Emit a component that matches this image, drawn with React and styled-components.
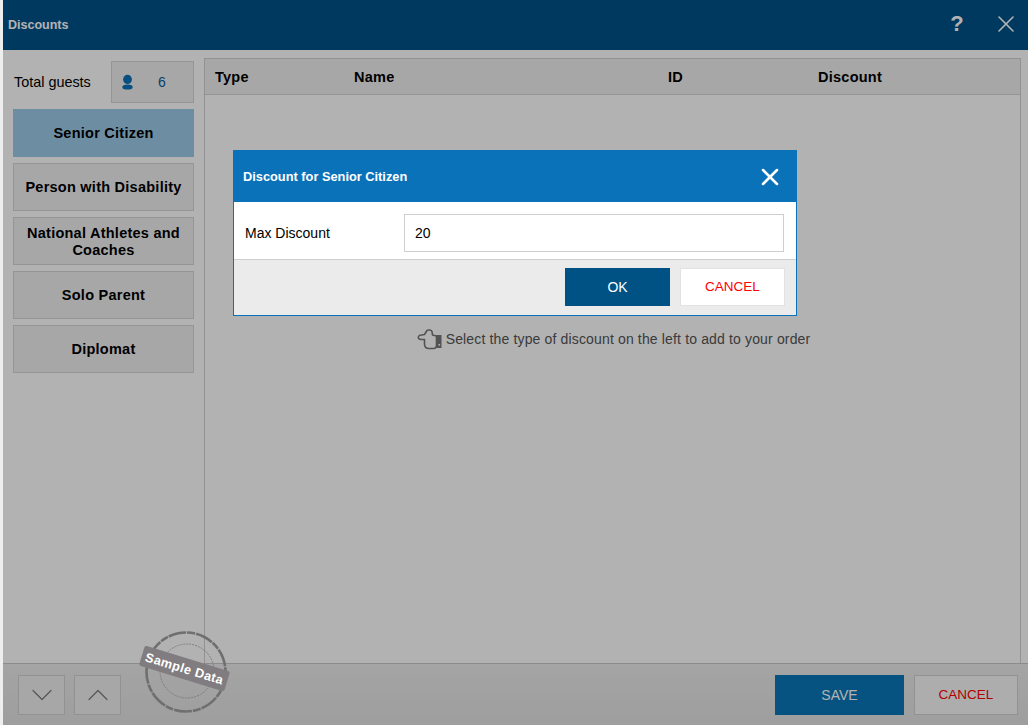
import React from "react";
import styled, { createGlobalStyle } from "styled-components";
import { X, ChevronDown, ChevronUp } from "lucide-react";

const GlobalStyle = createGlobalStyle`
  html, body {
    margin: 0;
    padding: 0;
    background: #eeeeee;
  }
  * {
    box-sizing: border-box;
  }
  body {
    font-family: "Liberation Sans", Arial, sans-serif;
  }
`;

const Page = styled.div`
  position: relative;
  display: flex;
  flex-direction: column;
  width: 1028px;
  height: 725px;
  overflow: hidden;
  background: #ffffff;
  border-left: 3px solid #eeeeee;
`;

const Accent = styled.div`
  position: absolute;
  left: -3px;
  top: 0;
  width: 3px;
  height: 50px;
  background: #005a8c;
`;

const TitleBar = styled.header`
  display: flex;
  align-items: center;
  height: 50px;
  flex: none;
  padding: 0 8px 2px 5px;
  background: #00528a;
  color: #ffffff;
`;

const Title = styled.h1`
  flex: 1;
  margin: 2px 0 0;
  font-size: 12.5px;
  font-weight: 700;
`;

const HelpMark = styled.span`
  width: 14px;
  margin-right: 28px;
  font-size: 22px;
  font-weight: 700;
  text-align: center;
`;

const Main = styled.main`
  display: flex;
  flex: 1;
  min-height: 0;
  gap: 10px;
  padding: 8px 7px 0 10px;
`;

const Sidebar = styled.aside`
  display: flex;
  flex-direction: column;
  gap: 6px;
  width: 181px;
  flex: none;
`;

const GuestRow = styled.div`
  display: flex;
  align-items: center;
  justify-content: space-between;
  height: 42px;
  margin-top: 3px;
  padding-left: 1px;
  font-size: 14.4px;
  color: #000000;
`;

const GuestBox = styled.div`
  display: flex;
  align-items: center;
  width: 83px;
  height: 42px;
  padding-left: 9px;
  border: 1px solid #d6d6d6;
  background: #f0f0f0;
  color: #0a5a94;
  font-size: 14px;
`;

const GuestCount = styled.span`
  margin-left: 24px;
`;

const TypeButton = styled.button`
  display: block;
  width: 181px;
  height: 48px;
  padding: 1px 6px 0;
  border: 1px solid ${({ $active }) => ($active ? "#9dcbe9" : "#d6d6d6")};
  background: ${({ $active }) => ($active ? "#9dcbe9" : "#f0f0f0")};
  color: #000000;
  font-family: inherit;
  font-size: 14.5px;
  font-weight: 700;
  line-height: 17px;
  letter-spacing: 0.25px;
`;

const TablePanel = styled.section`
  flex: 1;
  border: 1px solid #d2d2d2;
  border-bottom: 0;
  display: flex;
  flex-direction: column;
`;

const TableHead = styled.div`
  display: grid;
  grid-template-columns: 139px 314px 150px 1fr;
  align-items: center;
  height: 36px;
  flex: none;
  padding-left: 10px;
  background: #f0f0f0;
  border-bottom: 1px solid #d6d6d6;
  font-size: 14.5px;
  font-weight: 700;
  letter-spacing: 0.25px;
  color: #000000;
`;

const EmptyHint = styled.div`
  display: flex;
  align-items: center;
  justify-content: center;
  gap: 3px;
  margin-top: 233px;
  padding-left: 2px;
  font-size: 14px;
  letter-spacing: 0.15px;
  color: #555555;
`;

const Footer = styled.footer`
  display: flex;
  align-items: center;
  height: 62px;
  flex: none;
  padding: 0 10px 0 15px;
  background: linear-gradient(#ececec, #e3e3e3);
  border-top: 1px solid #c8c8c8;
`;

const ArrowButton = styled.button`
  display: flex;
  align-items: center;
  justify-content: center;
  width: 47px;
  height: 40px;
  margin-right: 9px;
  padding: 0;
  border: 1px solid #d2d2d2;
  background: #f0f0f0;
  color: #7a7a7a;
`;

const Spacer = styled.div`
  flex: 1;
`;

const SaveButton = styled.button`
  width: 129px;
  height: 40px;
  margin-right: 10px;
  border: 0;
  background: #0a76b8;
  color: #ffffff;
  font-family: inherit;
  font-size: 14px;
`;

const CancelButton = styled.button`
  width: 104px;
  height: 40px;
  border: 1px solid #d2d2d2;
  background: #f8f8f8;
  color: #ff0000;
  font-family: inherit;
  font-size: 13.5px;
`;

const Shade = styled.div`
  position: absolute;
  inset: 0;
  background: rgba(0, 0, 0, 0.3);
`;

const Stamp = styled.div`
  position: absolute;
  left: 136px;
  top: 629px;
  width: 94px;
  height: 88px;
`;

const StampLabel = styled.div`
  position: absolute;
  left: 1px;
  top: 29px;
  width: 89px;
  height: 21px;
  background: #807c80;
  border-radius: 2px;
  color: #ffffff;
  font-size: 12.8px;
  font-weight: 700;
  line-height: 21px;
  letter-spacing: 0.4px;
  text-align: center;
  white-space: nowrap;
  transform: rotate(17deg);
`;

const Dialog = styled.div`
  position: absolute;
  left: 230px;
  top: 150px;
  width: 564px;
  height: 166px;
  display: flex;
  flex-direction: column;
  background: #ffffff;
  border: 1px solid #0a72b8;
`;

const DialogHead = styled.div`
  display: flex;
  align-items: center;
  justify-content: space-between;
  height: 51px;
  flex: none;
  padding: 0 12px 0 9px;
  background: #0a72b8;
  color: #ffffff;
  font-size: 12.8px;
  font-weight: 700;
`;

const DialogBody = styled.div`
  display: flex;
  align-items: center;
  height: 58px;
  flex: none;
  padding: 5px 12px 0 11px;
  border-bottom: 1px solid #cfcfcf;
`;

const FieldLabel = styled.label`
  width: 159px;
  flex: none;
  font-size: 14px;
  color: #000000;
`;

const FieldInput = styled.input`
  flex: 1;
  min-width: 0;
  height: 38px;
  padding: 0 10px;
  border: 1px solid #cfcfcf;
  background: #ffffff;
  color: #000000;
  font-family: inherit;
  font-size: 14px;
  outline: none;
`;

const DialogActions = styled.div`
  display: flex;
  flex: 1;
  align-items: center;
  justify-content: flex-end;
  gap: 10px;
  padding: 0 11px 2px 0;
  background: #ebebeb;
`;

const OkButton = styled.button`
  width: 105px;
  height: 38px;
  border: 0;
  background: #005284;
  color: #ffffff;
  font-family: inherit;
  font-size: 14px;
`;

const DialogCancel = styled.button`
  width: 105px;
  height: 38px;
  border: 1px solid #e2e2e2;
  background: #ffffff;
  color: #ff0000;
  font-family: inherit;
  font-size: 13.5px;
`;

const PersonIcon = () => (
  <svg width="13" height="17" viewBox="0 0 13 17" fill="#0a72b8">
    <ellipse cx="6.5" cy="5.4" rx="4.4" ry="4.6" />
    <ellipse cx="6.5" cy="13" rx="5.2" ry="2.6" />
  </svg>
);

const HandIcon = () => (
  <svg width="26" height="22" viewBox="0 0 26 22" fill="none">
    <path
      d="M1.5 8.5 C2 7.3 3 7 4.5 7 L7.5 6.5 L10 2.5 C11 1.5 14.5 2 15 3.5 L15.5 7 L19.5 8 L19.5 17.5 C19.5 19.5 18.5 20.5 16.5 20.5 L12 20.5 C9 20.5 7.5 19 7.5 16 L7.5 11.5 L4 11.5 C2 11.5 0.8 10 1.5 8.5 Z"
      stroke="#777777"
      strokeWidth="1.6"
      strokeLinejoin="round"
    />
    <rect x="19.5" y="7" width="5" height="13" fill="#777777" />
    <rect x="21.5" y="16" width="1.6" height="1.6" fill="#ffffff" />
  </svg>
);

const StampRings = () => (
  <svg width="94" height="88" viewBox="0 0 94 88" fill="none">
    <circle cx="47" cy="43" r="39.5" stroke="#6f6f6f" strokeWidth="2.6" strokeDasharray="18 1 8 1" />
    <circle cx="48" cy="42" r="27" stroke="#7a7a7a" strokeWidth="0.9" strokeDasharray="2 1" />
  </svg>
);

const guestTypes = [
  "Senior Citizen",
  "Person with Disability",
  "National Athletes and Coaches",
  "Solo Parent",
  "Diplomat",
];

export default function App() {
  return (
    <>
      <GlobalStyle />
      <Page>
        <Accent />
        <TitleBar>
          <Title>Discounts</Title>
          <HelpMark>?</HelpMark>
          <X size={28} strokeWidth={1.4} />
        </TitleBar>
        <Main>
          <Sidebar>
            <GuestRow>
              Total guests
              <GuestBox>
                <PersonIcon />
                <GuestCount>6</GuestCount>
              </GuestBox>
            </GuestRow>
            {guestTypes.map((type, i) => (
              <TypeButton key={type} $active={i === 0}>
                {type}
              </TypeButton>
            ))}
          </Sidebar>
          <TablePanel>
            <TableHead>
              <span>Type</span>
              <span>Name</span>
              <span>ID</span>
              <span>Discount</span>
            </TableHead>
            <EmptyHint>
              <HandIcon />
              Select the type of discount on the left to add to your order
            </EmptyHint>
          </TablePanel>
        </Main>
        <Footer>
          <ArrowButton>
            <ChevronDown size={36} strokeWidth={0.8} />
          </ArrowButton>
          <ArrowButton>
            <ChevronUp size={36} strokeWidth={0.8} />
          </ArrowButton>
          <Spacer />
          <SaveButton>SAVE</SaveButton>
          <CancelButton>CANCEL</CancelButton>
        </Footer>
        <Shade />
        <Stamp>
          <StampRings />
          <StampLabel>Sample Data</StampLabel>
        </Stamp>
        <Dialog>
          <DialogHead>
            Discount for Senior Citizen
            <X size={28} strokeWidth={2.2} />
          </DialogHead>
          <DialogBody>
            <FieldLabel htmlFor="max-discount">Max Discount</FieldLabel>
            <FieldInput id="max-discount" defaultValue="20" />
          </DialogBody>
          <DialogActions>
            <OkButton>OK</OkButton>
            <DialogCancel>CANCEL</DialogCancel>
          </DialogActions>
        </Dialog>
      </Page>
    </>
  );
}
